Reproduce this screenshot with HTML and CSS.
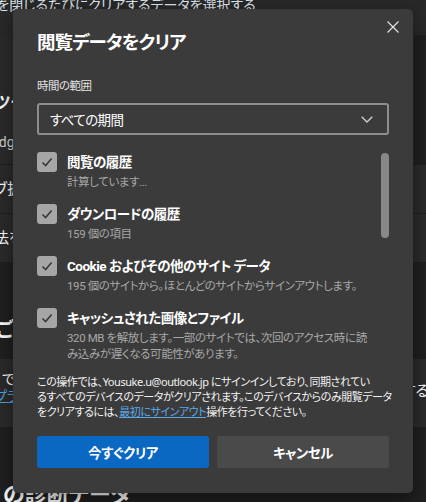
FILE: index.html
```html
<!DOCTYPE html>
<html lang="ja">
<head>
    <meta charset="UTF-8">
    <meta name="viewport" content="width=device-width, initial-scale=1.0">
    <title>閲覧データをクリア</title>
    <link rel="stylesheet" href="styles.css">
</head>
<body>

    <div class="page">
        <div class="top-bar"><span class="cut">ブラウザーを閉じるたびにクリアするデータを選択する</span></div>
        <div class="card card-big">
            <div class="row-title"><span class="cut">ツール</span></div>
            <div class="row-text"><span class="cut">Edge</span></div>
        </div>
        <div class="card card-row"><span class="cut">ブ拡張機能</span></div>
        <div class="card card-row"><span class="cut">法を選択</span></div>
        <div class="section-head"><span class="cut">ご診断</span></div>
        <div class="card card-info">
            <div class="info-left">
                <span class="cut">t で</span>
                <a class="cut page-link">プライバシー</a>
            </div>
            <div class="info-right">する</div>
        </div>
        <div class="section-head section-last"><span class="cut">の診断データ</span></div>
    </div>

    <div class="dialog">
        <h2 class="dialog-title">閲覧データをクリア</h2>
        <button class="close-btn" aria-label="閉じる">
            <svg width="12" height="12" viewBox="0 0 12 12"><path d="M0.5 0.5 L11.5 11.5 M11.5 0.5 L0.5 11.5" stroke="#e8e8e8" stroke-width="1.1" fill="none"/></svg>
        </button>

        <div class="field-label">時間の範囲</div>
        <div class="select">
            <span>すべての期間</span>
            <svg width="12" height="7" viewBox="0 0 12 7"><path d="M0.7 0.7 L6 6 L11.3 0.7" stroke="#d0d0d0" stroke-width="1.3" fill="none"/></svg>
        </div>

        <div class="list">
            <div class="item">
                <span class="check"><svg width="20" height="20" viewBox="0 0 20 20"><path d="M5.5 10.5 L8.6 13.6 L14.6 6.6" stroke="#363636" stroke-width="1.5" fill="none"/></svg></span>
                <div class="item-text">
                    <div class="item-label">閲覧の履歴</div>
                    <div class="item-sub">計算しています...</div>
                </div>
            </div>
            <div class="item">
                <span class="check"><svg width="20" height="20" viewBox="0 0 20 20"><path d="M5.5 10.5 L8.6 13.6 L14.6 6.6" stroke="#363636" stroke-width="1.5" fill="none"/></svg></span>
                <div class="item-text">
                    <div class="item-label">ダウンロードの履歴</div>
                    <div class="item-sub">159 個の項目</div>
                </div>
            </div>
            <div class="item">
                <span class="check"><svg width="20" height="20" viewBox="0 0 20 20"><path d="M5.5 10.5 L8.6 13.6 L14.6 6.6" stroke="#363636" stroke-width="1.5" fill="none"/></svg></span>
                <div class="item-text">
                    <div class="item-label">Cookie およびその他のサイト データ</div>
                    <div class="item-sub">195 個のサイトから。ほとんどのサイトからサインアウトします。</div>
                </div>
            </div>
            <div class="item">
                <span class="check"><svg width="20" height="20" viewBox="0 0 20 20"><path d="M5.5 10.5 L8.6 13.6 L14.6 6.6" stroke="#363636" stroke-width="1.5" fill="none"/></svg></span>
                <div class="item-text">
                    <div class="item-label">キャッシュされた画像とファイル</div>
                    <div class="item-sub">320 MB を解放します。一部のサイトでは、次回のアクセス時に読<br>み込みが遅くなる可能性があります。</div>
                </div>
            </div>
            <div class="scroll-thumb"></div>
        </div>

        <p class="notice">この操作では、Yousuke.u@outlook.jp にサインインしており、同期されてい<br>るすべてのデバイスのデータがクリアされます。このデバイスからのみ閲覧データ<br>をクリアするには、<a class="link">最初にサインアウト</a>操作を行ってください。</p>

        <div class="actions">
            <button class="btn btn-primary">今すぐクリア</button>
            <button class="btn btn-secondary">キャンセル</button>
        </div>
    </div>

</body>
</html>
```

FILE: styles.css
```css
body {
    margin: 0;
    width: 426px;
    height: 502px;
    overflow: hidden;
    background: #202020;
    color: #fff;
    font-family: Roboto, "Noto Sans CJK JP", sans-serif;
    font-feature-settings: "palt";
    position: relative;
}
.page {
    display: flex;
    flex-direction: column;
}
.cut {
    display: block;
    white-space: nowrap;
}
.top-bar {
    height: 35px;
    background: #292929;
    font-size: 14px;
    line-height: 16px;
    color: #dfe6ef;
}
.top-bar .cut {
    margin: -3px 0 0 -68px;
}
.card {
    background: #2b2b2b;
    border-bottom: 1px solid #1f1f1f;
    margin-right: 12px;
}
.card-big {
    height: 129px;
}
.row-title {
    margin-top: 58px;
    font-size: 16px;
    font-weight: 700;
    line-height: 20px;
}
.row-title .cut {
    margin-left: -5px;
}
.row-text {
    margin-top: 21px;
    font-size: 14px;
    color: #d6d6d6;
}
.row-text .cut {
    margin-left: -9px;
}
.card-row {
    height: 48px;
    font-size: 15px;
    line-height: 48px;
}
.card-row .cut {
    margin-left: -6px;
}
.card:nth-child(3) {
    margin-right: 0;
}
.card:nth-child(4) {
    margin-right: 0;
}
.section-head {
    height: 96px;
    font-size: 20px;
    font-weight: 700;
    display: flex;
    align-items: flex-end;
    padding-bottom: 16px;
    box-sizing: border-box;
}
.section-head .cut {
    margin-left: -4px;
}
.card-info {
    height: 68px;
    margin-right: 0;
    display: flex;
    justify-content: space-between;
    font-size: 14px;
}
.info-left {
    padding-top: 12px;
    line-height: 17px;
}
.info-left .cut {
    margin-left: -6px;
}
.page-link {
    color: #4fa3e0;
    text-decoration: underline;
}
.info-right {
    padding-top: 20px;
    font-size: 15px;
    margin-right: -3px;
}
.section-last {
    height: 80px;
    font-size: 22px;
    padding-bottom: 0;
    align-items: flex-start;
    padding-top: 48px;
}
.section-last .cut {
    margin-left: 3px;
}

/* dialog */
.dialog {
    position: absolute;
    left: 13px;
    top: 9px;
    width: 400px;
    height: 484px;
    box-sizing: border-box;
    padding: 20px 24px 25px;
    background: #3b3b3b;
    border-radius: 5px;
    box-shadow: 0 6px 20px rgba(0, 0, 0, 0.45);
    display: flex;
    flex-direction: column;
}
.dialog-title {
    margin: 0;
    font-size: 18.5px;
    font-weight: 700;
    letter-spacing: -0.9px;
    line-height: 28px;
    color: #fff;
}
.close-btn {
    position: absolute;
    top: 12px;
    left: 374px;
    width: 12px;
    height: 12px;
    padding: 0;
    border: none;
    background: none;
    display: flex;
}
.field-label {
    margin-top: 20px;
    font-size: 11.5px;
    letter-spacing: -0.5px;
    line-height: 18px;
    color: #e2e2e2;
}
.select {
    margin-top: 8px;
    height: 32px;
    box-sizing: border-box;
    border: 2px solid #8e8e8e;
    border-radius: 3px;
    padding: 0 14px 0 11px;
    display: flex;
    align-items: center;
    justify-content: space-between;
    font-size: 13.5px;
    letter-spacing: -0.6px;
    color: #fff;
}
.list {
    position: relative;
    margin-top: 10px;
    height: 217px;
    padding-top: 7px;
    box-sizing: border-box;
    overflow: hidden;
}
.item {
    display: flex;
    gap: 10px;
    margin-bottom: 14px;
}
.check {
    flex: none;
    width: 20px;
    height: 20px;
    border-radius: 3px;
    background: #a6a6a6;
    display: flex;
}
.item-text {
    width: 306px;
}
.item-label {
    font-size: 13.5px;
    font-weight: 700;
    letter-spacing: -0.5px;
    line-height: 20px;
    color: #fff;
}
.item-sub {
    margin-top: 2px;
    font-size: 11.5px;
    letter-spacing: -0.4px;
    line-height: 16px;
    color: #a8a8a8;
    white-space: nowrap;
}
.scroll-thumb {
    position: absolute;
    right: 0;
    top: 8px;
    width: 8px;
    height: 85px;
    border-radius: 4px;
    background: #888;
}
.notice {
    margin: 12px 0 0;
    font-family: "Noto Sans", "Noto Sans CJK JP", sans-serif;
    font-size: 11px;
    letter-spacing: -0.45px;
    line-height: 15px;
    color: #f2f2f2;
    white-space: nowrap;
}
.link {
    color: #5aa8e6;
    text-decoration: underline;
}
.actions {
    margin-top: auto;
    display: grid;
    grid-template-columns: 1fr 1fr;
    gap: 8px;
}
.btn {
    height: 32px;
    border: none;
    border-radius: 3px;
    font-family: inherit;
    font-feature-settings: "palt";
    font-size: 13.5px;
    font-weight: 700;
    letter-spacing: -0.5px;
    color: #fff;
}
.btn-primary {
    background: #0a68c2;
}
.btn-secondary {
    background: #4a4a4a;
}
```
